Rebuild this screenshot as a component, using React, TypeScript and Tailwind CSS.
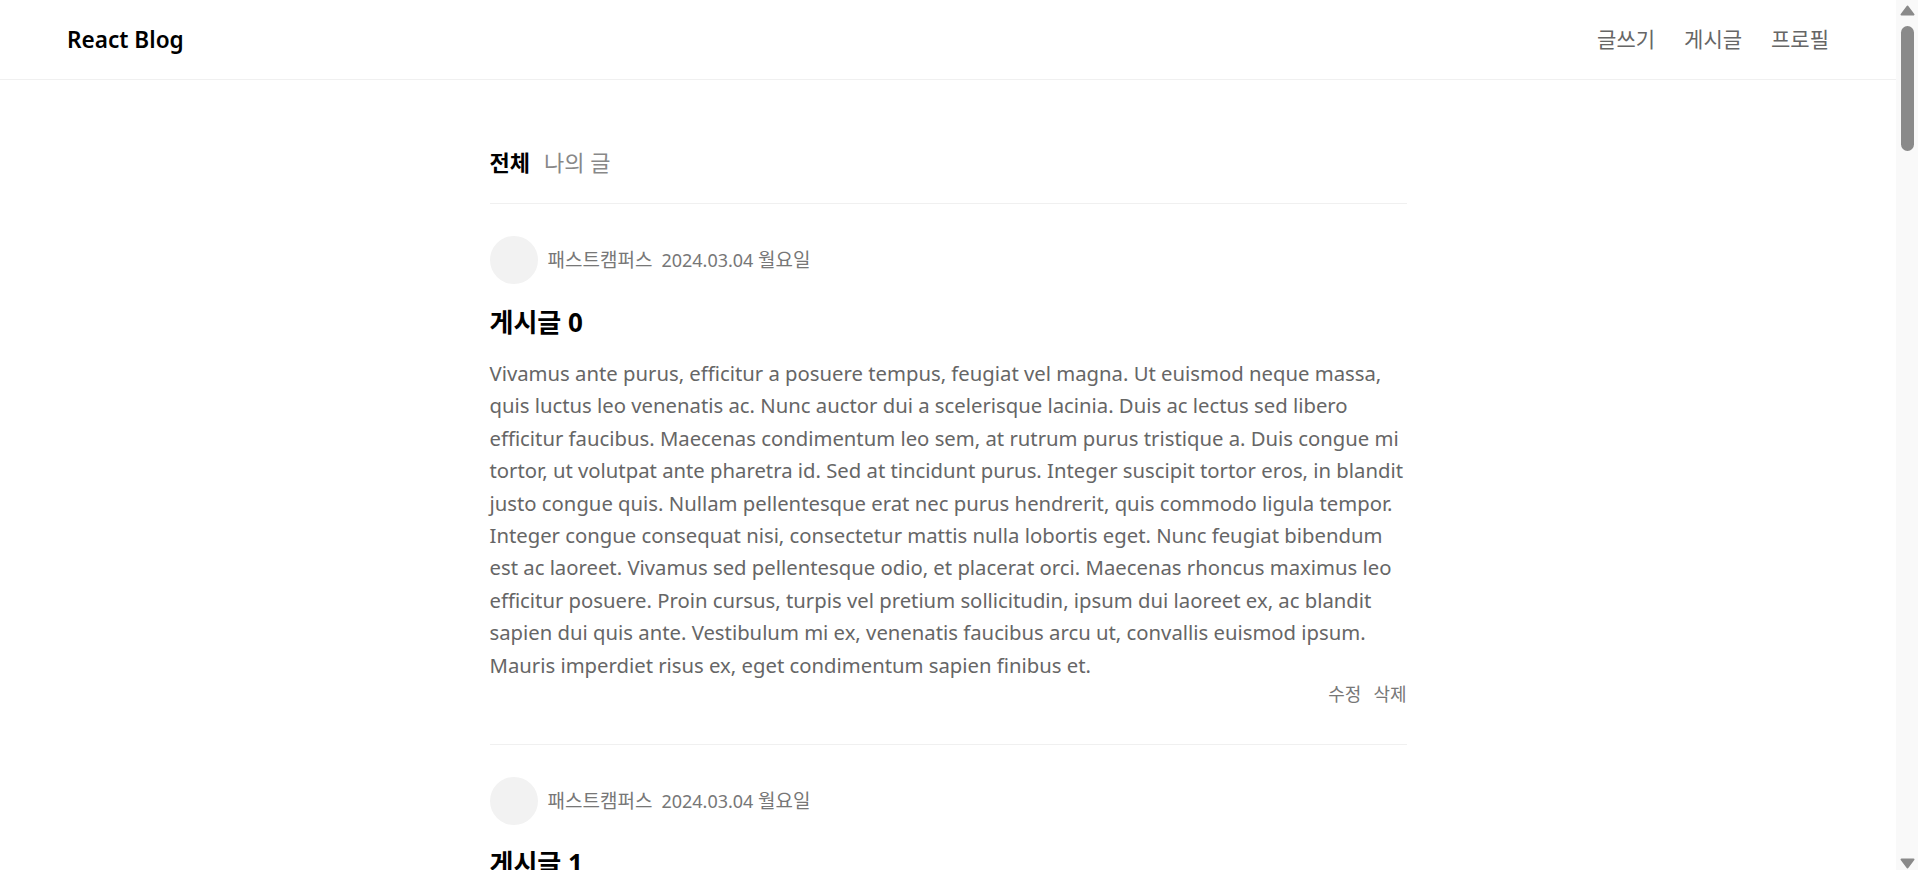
import React from "react";

const LINES = [
  "Vivamus ante purus, efficitur a posuere tempus, feugiat vel magna. Ut euismod neque massa,",
  "quis luctus leo venenatis ac. Nunc auctor dui a scelerisque lacinia. Duis ac lectus sed libero",
  "efficitur faucibus. Maecenas condimentum leo sem, at rutrum purus tristique a. Duis congue mi",
  "tortor, ut volutpat ante pharetra id. Sed at tincidunt purus. Integer suscipit tortor eros, in blandit",
  "justo congue quis. Nullam pellentesque erat nec purus hendrerit, quis commodo ligula tempor.",
  "Integer congue consequat nisi, consectetur mattis nulla lobortis eget. Nunc feugiat bibendum",
  "est ac laoreet. Vivamus sed pellentesque odio, et placerat orci. Maecenas rhoncus maximus leo",
  "efficitur posuere. Proin cursus, turpis vel pretium sollicitudin, ipsum dui laoreet ex, ac blandit",
  "sapien dui quis ante. Vestibulum mi ex, venenatis faucibus arcu ut, convallis euismod ipsum.",
  "Mauris imperdiet risus ex, eget condimentum sapien finibus et.",
];

function Post({ index }: { index: number }) {
  return (
    <div className="pt-[32px] pb-[36px] border-b border-[#f0f0f0]">
      <div className="flex items-center gap-[10px] h-[48px]">
        <div className="w-[48px] h-[48px] rounded-full bg-[#f2f2f2] shrink-0" />
        <div className="flex items-center gap-[9px] text-[#777]">
          <span className="text-[19px]">패스트캠퍼스</span>
          <span className="text-[18px]">
            2024.03.04 <span className="text-[19px]">월요일</span>
          </span>
        </div>
      </div>
      <h2 className="mt-[20px] text-[26px] leading-[36px] font-bold text-black">게시글 {index}</h2>
      <p className="mt-[17px] text-[20.3px] leading-[32.4px] text-[#666]">
        {LINES.map((l, i) => (
          <span key={i} className="block whitespace-nowrap">
            {l}
          </span>
        ))}
      </p>
      <div className="flex justify-end gap-[12px] text-[18px] leading-[27px] text-[#777]">
        <span className="cursor-pointer">수정</span>
        <span className="cursor-pointer">삭제</span>
      </div>
    </div>
  );
}

function FakeScrollbar() {
  return (
    <div className="w-[22px] h-full bg-[#f9f9f9] flex flex-col items-center shrink-0">
      <svg width="15" height="11" viewBox="0 0 15 11" className="mt-[5px]">
        <path d="M7.5 1.5 L13.5 9.5 L1.5 9.5 Z" fill="#8a8a8a" stroke="#8a8a8a" strokeWidth="2" strokeLinejoin="round" />
      </svg>
      <div className="mt-[10px] w-[13px] h-[125px] rounded-full bg-[#8a8a8a]" />
      <div className="flex-1" />
      <svg width="15" height="11" viewBox="0 0 15 11" className="mb-[1px]">
        <path d="M1.5 1.5 L13.5 1.5 L7.5 9.5 Z" fill="#8a8a8a" stroke="#8a8a8a" strokeWidth="2" strokeLinejoin="round" />
      </svg>
    </div>
  );
}

export default function App() {
  return (
    <div
      className="h-screen flex overflow-hidden bg-white"
      style={{ fontFamily: '"Noto Sans", "Noto Sans CJK KR", sans-serif' }}
    >
      <div className="flex-1 min-w-0 h-full overflow-hidden">
        <header className="h-[80px] border-b border-[#f0f0f0] flex items-center justify-between pl-[67px] pr-[67px]">
          <div className="text-[22.6px] font-semibold text-black">React Blog</div>
          <nav className="flex items-center gap-[29px] text-[21px] text-[#666]">
            <span>글쓰기</span>
            <span>게시글</span>
            <span>프로필</span>
          </nav>
        </header>
        <main className="w-[917px] mx-auto">
          <div className="pt-[67px] pb-[26px] border-b border-[#f0f0f0] flex gap-[14px] text-[22px] leading-[30px]">
            <span className="font-bold text-black">전체</span>
            <span className="text-[#888]">나의 글</span>
          </div>
          {Array.from({ length: 10 }).map((_, i) => (
            <Post key={i} index={i} />
          ))}
        </main>
      </div>
      <FakeScrollbar />
    </div>
  );
}
